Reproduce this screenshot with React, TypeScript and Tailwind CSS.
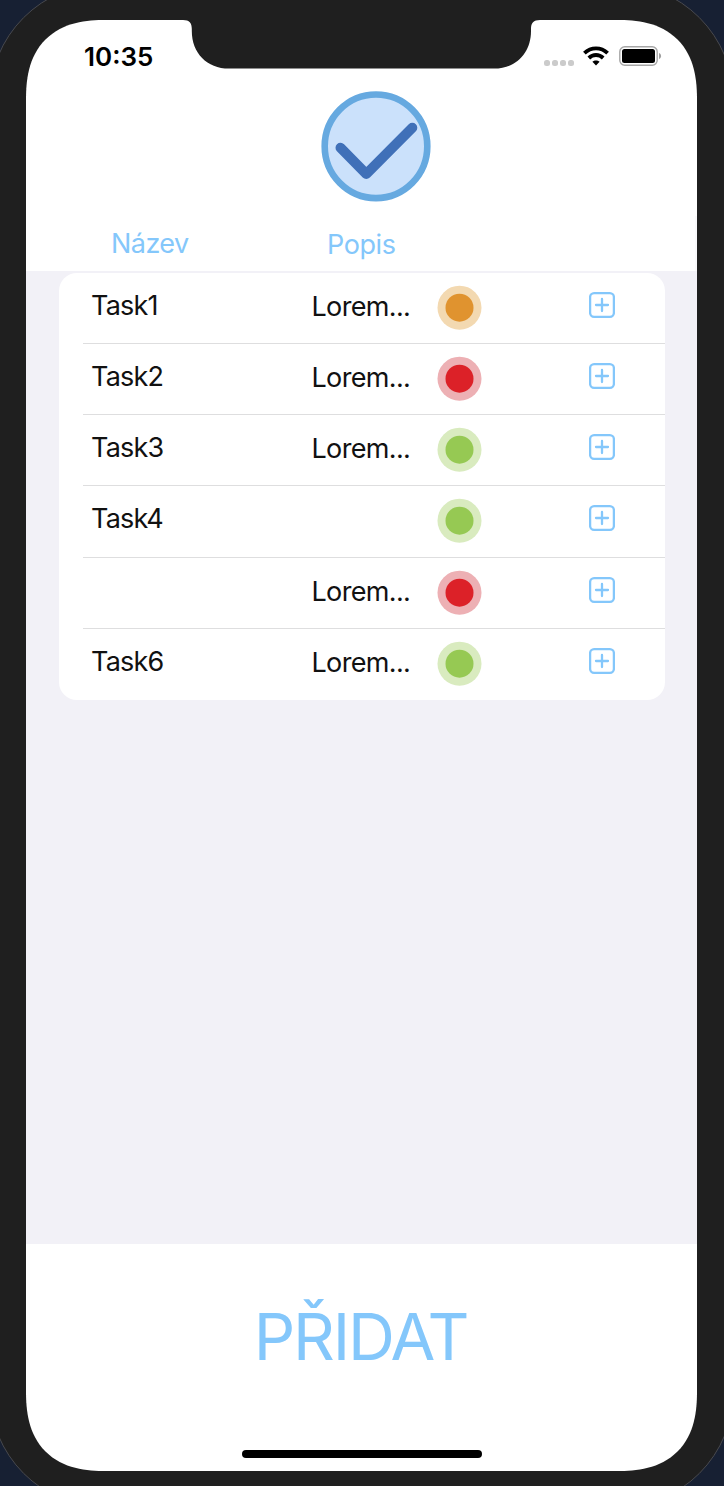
import React from "react";

type Level = "low" | "medium" | "high";

interface Task {
  name: string;
  description: string;
  level: Level;
}

const tasks: Task[] = [
  { name: "Task1", description: "Lorem...", level: "medium" },
  { name: "Task2", description: "Lorem...", level: "high" },
  { name: "Task3", description: "Lorem...", level: "low" },
  { name: "Task4", description: "", level: "low" },
  { name: "", description: "Lorem...", level: "high" },
  { name: "Task6", description: "Lorem...", level: "low" },
];

const levelColors: Record<Level, { core: string; ring: string }> = {
  low: { core: "fill-[#96c953]", ring: "fill-[#d9ebbf]" },
  medium: { core: "fill-[#e0932f]", ring: "fill-[#f3d9b1]" },
  high: { core: "fill-[#dc2128]", ring: "fill-[#edb0b4]" },
};

function Notch() {
  return (
    <svg className="absolute left-[156px] top-0" width="359" height="49" viewBox="0 0 359 49" aria-hidden="true">
      <path
        d="M0 0H1C7.5 0 9.8 3 9.8 9V11C9.8 33 25 48.6 47 48.6H312C334 48.6 349 33 349 11V9C349 3 351.5 0 358 0Z"
        fill="#1f1f1f"
      />
    </svg>
  );
}

function StatusBar() {
  return (
    <div className="flex h-[71px] items-start justify-between pl-[58px] pr-[35px] pt-[23px]">
      <span className="text-[26px] font-semibold leading-[27px] text-black">10:35</span>
      <div className="flex h-[26px] items-center">
        <div className="mr-[9px] mt-[13px] flex gap-[2px]">
          {[0, 1, 2, 3].map((dot) => (
            <span key={dot} className="size-[6px] rounded-[2.5px] bg-[#cbcbcb]" />
          ))}
        </div>
        <svg className="mr-[10px]" width="26" height="20" viewBox="0 0 26 20" aria-hidden="true">
          <g fill="none" stroke="#000" strokeWidth="3.8">
            <path d="M1.4 7.2C8 .8 18 .8 24.6 7.2" />
            <path d="M5.8 12C10 8 16 8 20.2 12" />
          </g>
          <path d="M13 19.5L9.4 15.8C11.4 13.9 14.6 13.9 16.6 15.8Z" fill="#000" />
        </svg>
        <svg width="43" height="20" viewBox="0 0 43 20" aria-hidden="true">
          <rect x=".8" y=".8" width="37.4" height="18.4" rx="5" fill="none" stroke="#a6a6a6" strokeWidth="1.4" />
          <rect x="3" y="3" width="33" height="14" rx="2.5" fill="#000" />
          <path d="M40 7C42.8 8 42.8 12 40 13Z" fill="#a0a0a0" />
        </svg>
      </div>
    </div>
  );
}

function Logo() {
  return (
    <svg width="110" height="112" viewBox="0 0 110 112" aria-hidden="true">
      <ellipse cx="55" cy="55.3" rx="51.3" ry="51.8" fill="#cbe1fb" stroke="#66a9e0" strokeWidth="6.6" />
      <path
        d="M19.5 56.7L45.3 83L91.3 36.7"
        fill="none"
        stroke="#4070b8"
        strokeWidth="10"
        strokeLinecap="round"
        strokeLinejoin="round"
      />
    </svg>
  );
}

function LevelDot({ level }: { level: Level }) {
  return (
    <svg className="mt-[13px] overflow-visible" width="44" height="44" viewBox="0 0 44 44" aria-hidden="true">
      <circle cx="21.5" cy="21.7" r="22" className={levelColors[level].ring} />
      <circle cx="21.5" cy="21.7" r="14" className={levelColors[level].core} />
    </svg>
  );
}

function PlusButton() {
  return (
    <button type="button" className="block" aria-label="+">
      <svg width="26" height="26" viewBox="0 0 26 26" fill="none" stroke="#84c7fb" strokeWidth="2.3" strokeLinecap="round">
        <rect x="1.1" y="1.2" width="23.8" height="23.6" rx="4" />
        <path d="M13 7V19M7 13H19" />
      </svg>
    </button>
  );
}

function TaskRow({ task, last }: { task: Task; last: boolean }) {
  return (
    <li className="flex flex-1 pl-[24px]">
      <div className={`flex w-full items-start pl-[9px] ${last ? "" : "border-b border-[#dededf]"}`}>
        <span className="mt-[17px] w-[220px] -ml-[0.5px] text-[27px] leading-[32px] tracking-[-0.8px]">{task.name}</span>
        <span className="mt-[18px] ml-[0.5px] w-[126px] text-[27px] leading-[32px] tracking-[-0.65px]">{task.description}</span>
        <LevelDot level={task.level} />
        <span className="ml-[107px] mt-[19px]">
          <PlusButton />
        </span>
      </div>
    </li>
  );
}

export default function App() {
  return (
    <div className="relative h-[1486px] w-[724px] overflow-hidden bg-[#172033] font-['Inter','Liberation_Sans',sans-serif] text-[#111]">
      <div className="absolute left-[-11px] top-[-17px] h-[1525px] w-[745px] rounded-[117px] border border-[#48494e] bg-[#1f1f1f] pl-[36px] pt-[36px]">
        <div className="relative flex h-[1451px] w-[671px] flex-col overflow-hidden rounded-[80px] bg-white [corner-shape:superellipse(1.31)]">
          <Notch />
          <StatusBar />
          <div className="flex h-[125px] justify-center pl-[29px]">
            <Logo />
          </div>
          <div className="flex h-[55px] shrink-0 items-start border-r-2 border-[#fafafc] pl-[85px] text-[27px] leading-[32px] text-[#84c7fb]">
            <span className="mt-[12px] w-[216px] tracking-[-0.55px]">Název</span>
            <span className="mt-[13px] tracking-[-0.4px]">Popis</span>
          </div>
          <main className="h-[973px] shrink-0 bg-[#f2f1f7] pl-[32.5px] pr-[32.5px] pt-[1.5px]">
            <ul className="flex h-[427.5px] flex-col overflow-hidden rounded-[18px] bg-white">
              {tasks.map((task, index) => (
                <TaskRow key={index} task={task} last={index === tasks.length - 1} />
              ))}
            </ul>
          </main>
          <footer className="flex flex-1 flex-col items-center">
            <button type="button" className="mt-[53px] -ml-[2px] text-[65px] leading-[80px] tracking-[-2.2px] text-[#84c7fb]">
              PŘIDAT
            </button>
            <div className="mt-auto mb-[13px] h-[8px] w-[240px] rounded-full bg-black" />
          </footer>
        </div>
      </div>
    </div>
  );
}
